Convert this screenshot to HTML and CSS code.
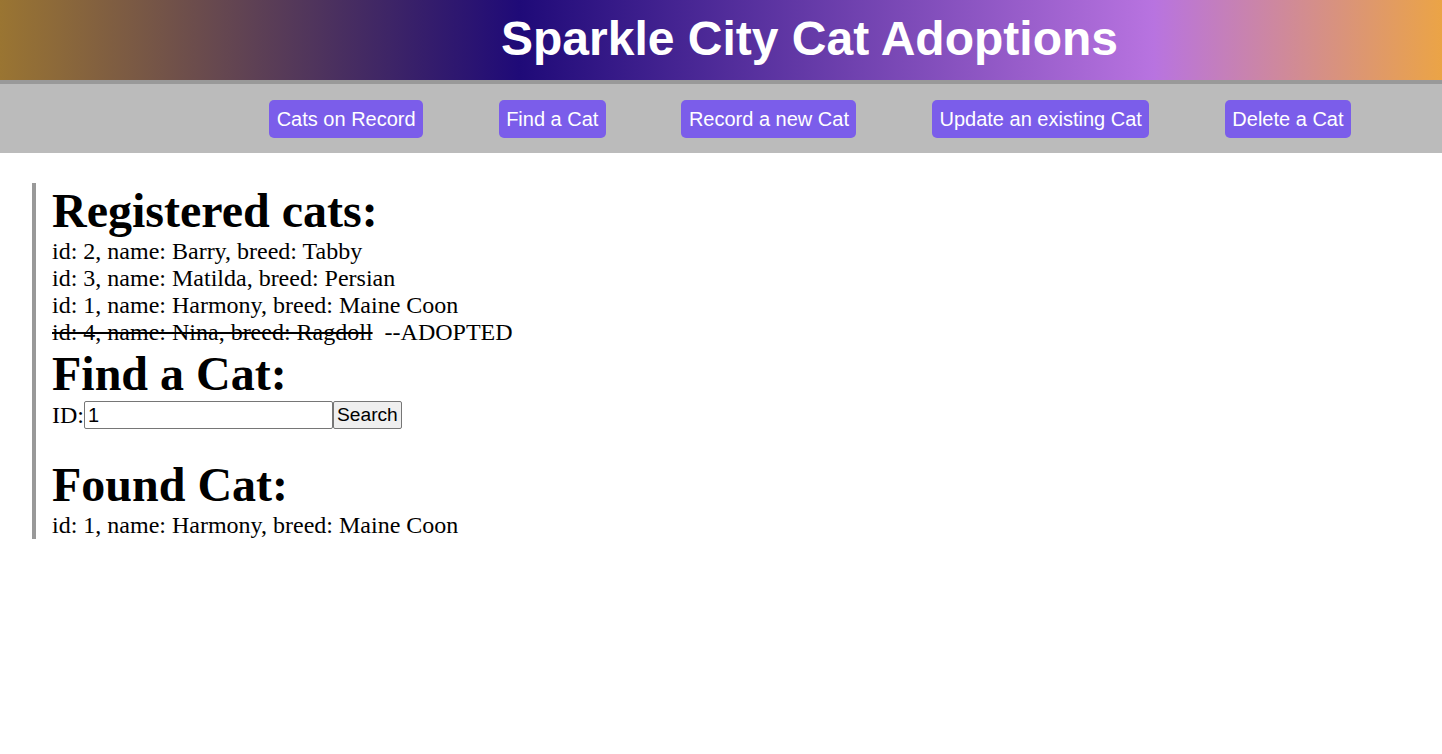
FILE: index.html
```html
<!DOCTYPE html>
<html>
<head>
<meta charset="utf-8">
<title>Sparkle City Cat Adoptions</title>
<link rel="stylesheet" href="styles.css">
</head>
<body>
<header class="banner">
  <h1 class="banner-title">Sparkle City Cat Adoptions</h1>
</header>
<nav class="nav">
  <a class="nav-btn" href="#">Cats on Record</a>
  <a class="nav-btn" href="#">Find a Cat</a>
  <a class="nav-btn" href="#">Record a new Cat</a>
  <a class="nav-btn" href="#">Update an existing Cat</a>
  <a class="nav-btn" href="#">Delete a Cat</a>
</nav>
<main class="content">
  <h2 class="section-title">Registered cats:</h2>
  <div class="cat-line">id: 2, name: Barry, breed: Tabby</div>
  <div class="cat-line">id: 3, name: Matilda, breed: Persian</div>
  <div class="cat-line">id: 1, name: Harmony, breed: Maine Coon</div>
  <div class="cat-line"><span class="adopted">id: 4, name: Nina, breed: Ragdoll</span>&nbsp; --ADOPTED</div>
  <h2 class="section-title">Find a Cat:</h2>
  <form class="find-form">
    <label class="find-label">ID:</label><input class="find-input" type="text" value="1"><button class="find-btn" type="button">Search</button>
  </form>
  <h2 class="section-title found-title">Found Cat:</h2>
  <div class="cat-line">id: 1, name: Harmony, breed: Maine Coon</div>
</main>
</body>
</html>
```
FILE: styles.css
```css
html, body {
  margin: 0;
  padding: 0;
  background: #ffffff;
}

body {
  font-family: "Liberation Serif", "Times New Roman", serif;
  color: #000;
}

.banner {
  height: 80px;
  background: linear-gradient(to right, #9a7532 0%, #1f0a78 36%, #b873e0 80%, #eba446 100%);
  border-bottom: 4px solid #999999;
  display: flex;
  align-items: center;
  justify-content: center;
  padding-left: 177px;
}

.banner-title {
  margin: 0;
  font-family: "Liberation Sans", Arial, sans-serif;
  font-weight: bold;
  font-size: 48px;
  color: #ffffff;
  line-height: 55px;
  position: relative;
  top: -2px;
}

.nav {
  height: 69px;
  background: #bbbbbb;
  display: flex;
  align-items: flex-start;
  justify-content: flex-end;
  gap: 75.5px;
  padding: 16px 91px 0 0;
  box-sizing: border-box;
}

.nav-btn {
  display: block;
  background: #7b5dea;
  color: #ffffff;
  text-decoration: none;
  font-family: "Liberation Sans", Arial, sans-serif;
  font-size: 20px;
  line-height: 23px;
  padding: 7.5px 7.5px;
  border-radius: 5px;
}

.content {
  margin: 30px 0 0 32px;
  border-left: 4px solid #999999;
  padding-left: 16px;
  width: max-content;
}

.section-title {
  margin: 0;
  font-size: 48px;
  font-weight: bold;
}

.found-title {
  margin-top: 28px;
}

.cat-line {
  font-size: 24px;
}

.adopted {
  text-decoration: line-through;
}

.find-form {
  margin: 0;
  display: flex;
  align-items: center;
  font-size: 24px;
}

.find-label {
  line-height: 28px;
}

.find-input {
  box-sizing: border-box;
  width: 249px;
  height: 28px;
  margin: 0;
  padding: 1px 3px;
  border: 1px solid #767676;
  border-radius: 2px;
  font-family: "Liberation Sans", Arial, sans-serif;
  font-size: 20px;
}

.find-btn {
  box-sizing: border-box;
  height: 28px;
  margin: 0;
  padding: 0 3px;
  border: 1px solid #767676;
  border-radius: 2px;
  background: #efefef;
  font-family: "Liberation Sans", Arial, sans-serif;
  font-size: 19.2px;
  color: #000;
}
```
